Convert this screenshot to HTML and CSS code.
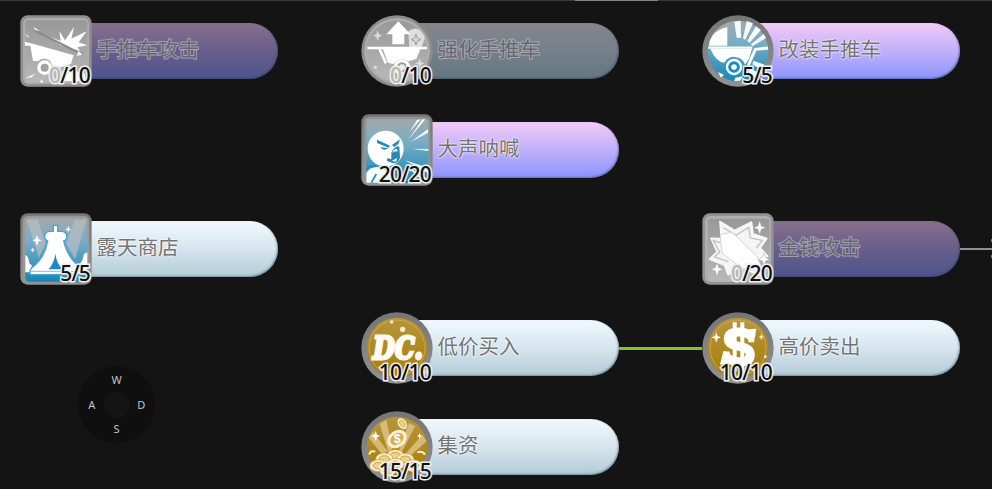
FILE: index.html
```html
<!DOCTYPE html>
<html lang="zh-CN">
<head>
    <meta charset="UTF-8">
    <title>技能</title>
    <link rel="stylesheet" href="styles.css">
</head>
<body>

    <!-- shared gradients and shapes -->
    <svg class="defs" width="0" height="0">
        <defs>
            <linearGradient id="gray" x1="0" y1="0" x2="0" y2="1">
                <stop offset="0" stop-color="#989898"/>
                <stop offset="1" stop-color="#b8b8b8"/>
            </linearGradient>
            <linearGradient id="blue" x1="0" y1="0" x2="0" y2="1">
                <stop offset="0" stop-color="#a4a8aa"/>
                <stop offset="0.35" stop-color="#7badc5"/>
                <stop offset="1" stop-color="#1686b8"/>
            </linearGradient>
            <linearGradient id="gold" x1="0" y1="0" x2="0" y2="1">
                <stop offset="0" stop-color="#b6963d"/>
                <stop offset="1" stop-color="#a77c09"/>
            </linearGradient>
            <linearGradient id="rim" x1="0" y1="0" x2="0" y2="1">
                <stop offset="0" stop-color="#757575"/>
                <stop offset="1" stop-color="#929292"/>
            </linearGradient>
            <path id="star" d="M0 -16 L4 -4 L14 0 L4 4 L0 16 L-4 4 L-14 0 L-4 -4Z"/>
            <g id="coin">
                <ellipse rx="26" ry="18" fill="#fff1cf" stroke="#c79a3a" stroke-width="2"/>
                <ellipse rx="16" ry="10" fill="#ecd08c" stroke="#cfa044" stroke-width="3"/>
            </g>
        </defs>
    </svg>

    <div class="scrollbar"><div class="thumb"></div></div>

    <div class="skillTree">

        <div class="skill purple off col1 row1">
            <div class="icon">
                <svg viewBox="0 0 216 216">
                    <rect x="1" y="1" width="214" height="214" rx="22" fill="#8f8f8f"/>
                    <rect x="9" y="9" width="198" height="198" rx="16" fill="#adadad"/>
                    <rect x="16" y="16" width="186" height="186" rx="10" fill="url(#gray)"/>
                    <path fill="#fff" d="M75 60L122 78L118 48L135 76L162 36L154 71L200 49L176 82L202 91L172 97L180 108L120 90Z"/>
                    <path fill="#fff" d="M15 56L30 67L22 65ZM40 35L58 47L50 51Z"/>
                    <path stroke="#8b8b8b" stroke-width="7" d="M46 47L188 119"/>
                    <path fill="#fff" d="M14 80L44 88L161 121L153 146L123 157L96 151A24 24 0 0 0 55 138L39 138L31 92L15 92Z"/>
                    <circle cx="74" cy="158" r="17" fill="#a2a2a2" stroke="#fff" stroke-width="10"/>
                    <path fill="#fff" d="M171 122L174 108L188 119ZM16 190L48 175L34 187ZM60 201L66 193L69 204Z"/>
                    <path fill="#fff" d="M126 171L148 154L166 169L194 175L198 198L124 198Z"/>
                </svg>
                <span class="level"><i>0</i>/10</span>
            </div>
            <div class="name">手推车攻击</div>
        </div>

        <div class="skill steel off col2 row1">
            <div class="icon">
                <svg viewBox="0 0 216 216">
                    <circle cx="108" cy="108" r="107" fill="#8c8c8c"/>
                    <circle cx="108" cy="108" r="99" fill="#acacac"/>
                    <circle cx="108" cy="108" r="91" fill="url(#gray)"/>
                    <path fill="#dedede" d="M142 49Q172 26 192 68L181 99L145 96Z"/>
                    <path fill="#fff" d="M112 19L148 58H130V88H94V58H76Z"/>
                    <path fill="none" stroke="#fff" stroke-width="8" d="M19 99H198M54 99L75 145"/>
                    <path fill="#fff" d="M64 98H180L166 132L142 139A30 30 0 0 0 98 147L81 143Z"/>
                    <circle cx="123" cy="157" r="20" fill="#999" stroke="#fff" stroke-width="9"/>
                    <circle cx="123" cy="157" r="9" fill="#eee"/>
                    <use href="#star" x="50" y="62" fill="#ddd"/>
                    <use href="#star" x="165" y="74" fill="#ddd" stroke="#999" stroke-width="3"/>
                    <use href="#star" x="176" y="145" fill="#ddd"/>
                    <circle cx="43" cy="157" r="5" fill="#ddd"/>
                </svg>
                <span class="level"><i>0</i>/10</span>
            </div>
            <div class="name">强化手推车</div>
        </div>

        <div class="skill purple col3 row1">
            <div class="icon">
                <svg viewBox="0 0 216 216">
                    <circle cx="108" cy="108" r="107" fill="url(#rim)"/>
                    <circle cx="108" cy="108" r="91" fill="url(#blue)"/>
                    <path fill="#f3fbff" d="M104 68L97 20L116 17L117 69ZM123 70L134 18L153 25L130 74ZM136 77L162 34L177 45L142 84ZM147 88L185 57L192 69L151 94ZM154 137L187 149L179 165L151 148ZM142 160L172 174L157 188L137 175Z"/>
                    <path fill="#fff" d="M76 36V92H21Q25 48 76 36Z"/>
                    <path stroke="#fff" stroke-width="7" d="M19 98H151"/>
                    <path fill="#fff" d="M25 101H150L142 130L129 149A34 34 0 0 0 67 143Q42 141 25 101Z"/>
                    <path fill="none" stroke="#fff" stroke-width="9" d="M198 99L160 103L139 151"/>
                    <circle cx="96" cy="156" r="18" fill="#fff" stroke="#fff" stroke-width="13"/>
                    <circle cx="96" cy="156" r="13" fill="none" stroke="#178cc4" stroke-width="9"/>
                    <path fill="#fff" d="M48 171L66 180L57 188ZM100 188L122 184L115 197L97 198Z"/>
                </svg>
                <span class="level">5/5</span>
            </div>
            <div class="name">改装手推车</div>
        </div>

        <div class="skill purple col2 row2">
            <div class="icon">
                <svg viewBox="0 0 216 216">
                    <rect x="1" y="1" width="214" height="214" rx="22" fill="url(#rim)"/>
                    <rect x="8" y="8" width="200" height="200" rx="17" fill="#909494"/>
                    <rect x="16" y="16" width="186" height="190" rx="10" fill="url(#blue)"/>
                    <path fill="#f2fbff" d="M145 55L168 18L179 16ZM142 77L184 16H193ZM149 84L201 45V56ZM153 104L202 105V111ZM131 139L202 161V178ZM132 153L201 196H180Z"/>
                    <path fill="#fff" d="M16 206V177Q28 157 56 158L90 180V206Z"/>
                    <path fill="none" stroke="#188dbd" stroke-width="5" d="M16 166Q27 154 46 156M31 206L46 180"/>
                    <circle cx="74" cy="104" r="54" fill="#fff"/>
                    <path fill="#238bb5" d="M48 77L87 95L83 101L48 87ZM93 93L117 76L112 90L99 99ZM58 100Q67 113 82 102ZM91 116Q104 92 115 98L117 131Q112 149 95 147L78 141V133L91 135Z"/>
                    <path fill="#fff" d="M96 112Q104 99 109 107V113Q100 109 95 117ZM93 140L108 132L107 139Q103 146 93 140Z"/>
                </svg>
                <span class="level">20/20</span>
            </div>
            <div class="name">大声呐喊</div>
        </div>

        <div class="skill white col1 row3">
            <div class="icon">
                <svg viewBox="0 0 216 216">
                    <rect x="1" y="1" width="214" height="214" rx="22" fill="url(#rim)"/>
                    <rect x="8" y="8" width="200" height="200" rx="17" fill="#999"/>
                    <rect x="16" y="16" width="186" height="190" rx="10" fill="url(#blue)"/>
                    <path fill="#b4bec4" opacity=".75" d="M20 20H53L76 91L57 134ZM200 20H164L139 92L165 139Z"/>
                    <path fill="#fff" d="M16 126L24 133L28 151L36 158L29 178H16ZM202 118L192 123L187 142L178 156L191 178H202Z"/>
                    <path fill="#fff" stroke="#46a3d4" stroke-width="4" d="M100 37H113V55H126Q140 57 140 70Q140 83 131 84Q142 134 182 164V172H201V185H30V172L36 164Q75 134 83 84Q74 82 74 70Q74 57 88 55H100Z"/>
                    <path fill="#198bca" d="M106 121Q104 146 86 169H126Q108 145 106 121Z"/>
                    <path stroke="#88bddd" stroke-width="3" d="M31 175H199"/>
                    <g fill="#fff">
                        <use href="#star" x="51" y="82"/>
                        <use href="#star" transform="translate(145 49) scale(.65)"/>
                        <use href="#star" transform="translate(38 111) scale(.5)"/>
                    </g>
                </svg>
                <span class="level">5/5</span>
            </div>
            <div class="name">露天商店</div>
        </div>

        <div class="skill purple off col3 row3">
            <div class="icon">
                <svg viewBox="0 0 216 216">
                    <rect x="1" y="1" width="214" height="214" rx="22" fill="#929292"/>
                    <rect x="9" y="9" width="198" height="198" rx="16" fill="#afafaf"/>
                    <rect x="18" y="17" width="184" height="187" rx="8" fill="url(#gray)"/>
                    <path fill="#f5f5f5" stroke="#fff" stroke-width="3" d="M53 24L98 51L149 26L154 62L196 76L176 105L199 130L166 140L180 192L113 162L78 187L67 157L21 139L44 116L26 75L57 76Z"/>
                    <path fill="none" stroke="#c2c2c2" stroke-width="4" d="M64 44L102 67L140 43L145 75L181 82L163 105M56 90L34 83L53 117L37 132L79 146"/>
                    <path fill="#fff" stroke="#d6d6d6" stroke-width="3" d="M55 65L90 58L164 129L184 176L120 166L60 120Z"/>
                    <g fill="#fff" stroke="#aaa" stroke-width="1">
                        <use href="#star" transform="translate(173 44) scale(1.25)"/>
                        <use href="#star" transform="translate(186 139) scale(1.2)"/>
                        <use href="#star" transform="translate(45 169) scale(1.25)"/>
                    </g>
                </svg>
                <span class="level"><i>0</i>/20</span>
            </div>
            <div class="name">金钱攻击</div>
        </div>
        <div class="link next row3"></div>

        <div class="skill white col2 row4">
            <div class="icon">
                <svg viewBox="0 0 216 216">
                    <circle cx="108" cy="108" r="107" fill="url(#rim)"/>
                    <circle cx="108" cy="108" r="91" fill="url(#gold)"/>
                    <circle cx="108" cy="108" r="84" fill="none" stroke="#cfa842" stroke-width="3"/>
                    <text class="dcText" x="36" y="141" textLength="150" lengthAdjust="spacingAndGlyphs">DC.</text>
                    <circle cx="125" cy="52" r="8" fill="#ffebc0"/>
                    <circle cx="92" cy="30" r="5" fill="#ffebc0"/>
                </svg>
                <span class="level">10/10</span>
            </div>
            <div class="name">低价买入</div>
        </div>
        <div class="link done row4"></div>

        <div class="skill white col3 row4">
            <div class="icon">
                <svg viewBox="0 0 216 216">
                    <circle cx="108" cy="108" r="107" fill="url(#rim)"/>
                    <circle cx="108" cy="108" r="91" fill="url(#gold)"/>
                    <circle cx="108" cy="108" r="84" fill="none" stroke="#cfa842" stroke-width="3"/>
                    <!-- dollar sign: one thick curve and two bars -->
                    <path fill="none" stroke="#fff" stroke-width="27" d="M150 77Q138 60 112 60Q79 60 79 81Q79 98 110 103Q145 108 145 128Q145 149 113 149Q82 149 70 130"/>
                    <path fill="#fff" d="M142 51L163 50L156 91H139ZM54 158L64 117L84 119L77 153Z"/>
                    <path stroke="#fff" stroke-width="12" d="M98 31V178M121 31V178"/>
                    <g fill="#fff6dd">
                        <use href="#star" x="43" y="76"/>
                        <use href="#star" transform="translate(178 75) scale(.6)"/>
                        <circle cx="190" cy="134" r="4"/>
                        <circle cx="62" cy="171" r="3"/>
                    </g>
                </svg>
                <span class="level">10/10</span>
            </div>
            <div class="name">高价卖出</div>
        </div>

        <div class="skill white col2 row5">
            <div class="icon">
                <svg viewBox="0 0 216 216">
                    <circle cx="108" cy="108" r="107" fill="url(#rim)"/>
                    <circle cx="108" cy="108" r="91" fill="url(#gold)"/>
                    <path fill="#dfc58a" opacity=".8" d="M23 80L36 62L80 121L64 131ZM56 38L76 26L96 124H82ZM144 36L163 45L121 126H111ZM184 71L197 91L145 137L133 129Z"/>
                    <use href="#coin" transform="translate(124 38) rotate(55) scale(.72)"/>
                    <ellipse rx="32" ry="25" fill="#fff1cf" transform="translate(108 84) rotate(-38)"/>
                    <ellipse rx="22" ry="16" fill="#d9ae50" transform="translate(108 84) rotate(-38)"/>
                    <text class="coinText" x="98" y="97">$</text>
                    <use href="#coin" transform="translate(103 134)"/>
                    <use href="#coin" transform="translate(70 144)"/>
                    <use href="#coin" transform="translate(133 145)"/>
                    <use href="#coin" transform="translate(52 164)"/>
                    <use href="#coin" transform="translate(103 160)"/>
                    <use href="#coin" transform="translate(157 164)"/>
                    <use href="#coin" transform="translate(80 180) scale(.9)"/>
                    <g fill="#fff">
                        <use href="#star" x="44" y="75"/>
                        <use href="#star" transform="translate(176 75) scale(.6)"/>
                    </g>
                    <path fill="none" stroke="#fff2ce" stroke-width="6" d="M25 131Q27 117 43 122M192 131Q184 119 169 124"/>
                </svg>
                <span class="level">15/15</span>
            </div>
            <div class="name">集资</div>
        </div>

    </div>

    <div class="pad">
        <span class="up">W</span>
        <span class="left">A</span>
        <span class="knob"></span>
        <span class="right">D</span>
        <span class="down">S</span>
    </div>

</body>
</html>
```
FILE: styles.css
```css
body {
    margin: 0;
    width: 992px;
    height: 489px;
    overflow: hidden;
    position: relative;
    background: #141414;
    font-family: "Noto Sans", "Noto Sans CJK SC", sans-serif;
}

.defs {
    position: absolute;
}

.scrollbar {
    height: 1px;
    padding-left: 575px;
    background: #3a3a3a;
}

.thumb {
    width: 83px;
    height: 1px;
    background: #858585;
}

/* skills sit in the wide columns, links in the narrow ones */
.skillTree {
    display: grid;
    grid-template-columns: 258px 83px 258px 83px 258px 32px;
    grid-template-rows: repeat(5, 72px);
    row-gap: 27px;
    padding: 14px 0 0 20px;
    align-items: center;
}

.col1 { grid-column: 1; }
.col2 { grid-column: 3; }
.col3 { grid-column: 5; }
.row1 { grid-row: 1; }
.row2 { grid-row: 2; }
.row3 { grid-row: 3; }
.row4 { grid-row: 4; }
.row5 { grid-row: 5; }

.skill {
    display: flex;
    align-items: center;
    height: 72px;
}

.icon {
    position: relative;
    z-index: 1;
    flex: none;
    width: 72px;
    height: 72px;
}

.icon svg {
    display: block;
    width: 72px;
    height: 72px;
    overflow: visible;
}

.level {
    position: absolute;
    right: 2px;
    bottom: 0;
    font-size: 21px;
    font-weight: 500;
    line-height: 24px;
    letter-spacing: -0.8px;
    color: #111;
    -webkit-text-stroke: 3px #eee;
    paint-order: stroke fill;
}

.level i {
    font-style: normal;
    color: #b5b5b5;
}

.name {
    box-sizing: border-box;
    flex: 1;
    height: 56px;
    margin-left: -36px;
    padding-left: 40.5px;
    border-radius: 0 28px 28px 0;
    font-family: "Noto Sans CJK SC", sans-serif;
    font-size: 20.5px;
    line-height: 51px;
    color: #747474;
    text-shadow: 0 0 2px #fff, 0 0 2px #fff;
    box-shadow: inset -1px -1px 2px rgba(40, 60, 80, 0.45);
}

.purple .name {
    background: linear-gradient(#f2caf8, #c0b0fa 50%, #8b94ff);
}

.white .name {
    background: linear-gradient(#f1f9ff, #d6e5ee 50%, #b3cbd7);
}

.steel .name {
    background: linear-gradient(#85868a, #75808a 50%, #647780);
}

.purple.off .name {
    background: linear-gradient(#876f8b, #695e8b 50%, #4c558b);
}

.off .name {
    color: #666672;
    -webkit-text-stroke: 2px rgba(190, 190, 195, 0.7);
    paint-order: stroke fill;
    text-shadow: none;
}

.link {
    height: 3px;
}

.done {
    grid-column: 4;
    background: #83c525;
}

.next {
    position: relative;
    grid-column: 6;
    height: 2px;
    background: #909090;
}

/* tips of the next icon, at the edge of the view */
.next::before,
.next::after {
    content: '';
    position: absolute;
    right: 0;
    width: 1px;
    height: 3px;
    background: #777;
}

.next::before { top: -9px; }
.next::after { top: 7px; }

.dcText {
    font: italic bold 96px "DejaVu Serif", serif;
    fill: #fff;
    stroke: #fffaf0;
    stroke-width: 9px;
}

.coinText {
    font: bold 38px "Liberation Sans", sans-serif;
    fill: #fff;
}

/* movement pad floats over the tree */
.pad {
    position: absolute;
    left: 78px;
    top: 366px;
    box-sizing: border-box;
    width: 77px;
    height: 77px;
    padding: 2px;
    border-radius: 50%;
    background: #0f0f0f;
    display: grid;
    grid-template: repeat(3, 1fr) / repeat(3, 1fr);
    place-items: center;
    font-size: 11px;
    line-height: 14px;
    color: #c4c4c4;
}

.up { grid-area: 1 / 2; }
.left { grid-area: 2 / 1; }
.right { grid-area: 2 / 3; }
.down { grid-area: 3 / 2; }

.knob {
    grid-area: 2 / 2;
    width: 26px;
    height: 26px;
    border-radius: 50%;
    background: #141414;
}
```
